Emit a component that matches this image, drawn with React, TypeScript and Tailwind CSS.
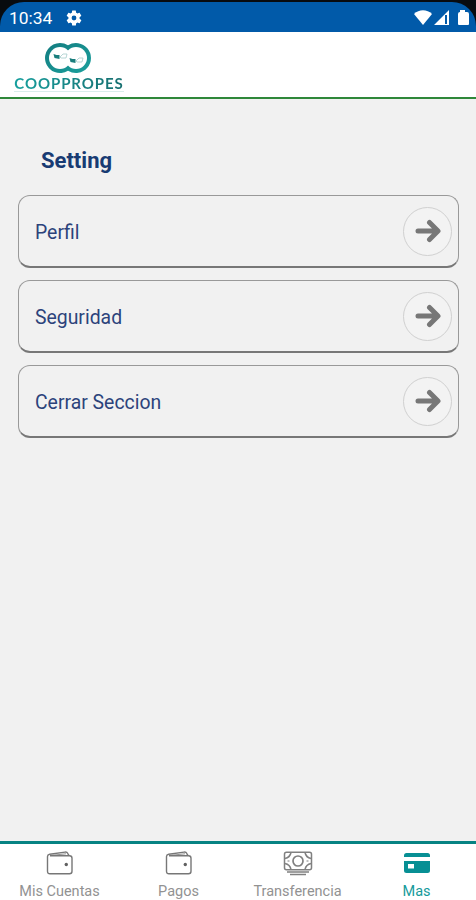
import type { ReactNode } from "react";

type TabItem = {
  label: string;
  icon: ReactNode;
  active?: boolean;
};

function StatusBar() {
  return (
    <div className="h-8 shrink-0 bg-[#080b0f] pt-[2px]">
      <div className="flex h-[30px] items-center justify-between rounded-t-[24px] bg-[#015aa9] pl-[9px] pr-[7px] text-white">
        <div className="flex items-center gap-[13px] pt-px">
          <span className="w-[43px] whitespace-nowrap text-[17.4px] leading-5">10:34</span>
          <svg width="18" height="18" viewBox="0 0 24 24" fill="currentColor">
            <path d="M19.4 13c.04-.3.06-.65.06-1s-.02-.7-.07-1l2.1-1.63a.5.5 0 0 0 .12-.64l-2-3.46a.5.5 0 0 0-.6-.22l-2.5 1a7.3 7.3 0 0 0-1.68-.98l-.38-2.65A.5.5 0 0 0 14 2h-4a.5.5 0 0 0-.5.42l-.37 2.65c-.6.25-1.17.58-1.68.98l-2.5-1a.5.5 0 0 0-.6.22l-2 3.46a.5.5 0 0 0 .12.64L4.6 11c-.05.3-.07.66-.07 1s.02.69.07 1l-2.12 1.63a.5.5 0 0 0-.12.64l2 3.46c.13.22.39.3.6.22l2.5-1c.52.4 1.08.73 1.69.98l.37 2.65c.04.24.25.42.5.42h4a.5.5 0 0 0 .5-.42l.37-2.65c.6-.25 1.17-.58 1.69-.98l2.5 1c.22.08.47 0 .6-.22l2-3.46a.5.5 0 0 0-.12-.64zM12 15.2a3.2 3.2 0 1 1 0-6.4 3.2 3.2 0 0 1 0 6.4z" />
          </svg>
        </div>
        <svg width="56" height="18" viewBox="0 0 56 18" fill="currentColor" className="mt-px">
          <path d="M1 5C6 0 14 0 19 5L10 16z" />
          <path fillRule="evenodd" d="M21 16 36 1v15zM32 6v9h2V6z" />
          <path d="M47 1h5v2h2q2 0 2 2v10q0 1-1 1H46q-1 0-1-1V5q0-2 2-2z" />
        </svg>
      </div>
    </div>
  );
}

function Logo() {
  return (
    <div className="flex w-[110px] flex-col items-center">
      <svg width="46" height="32" viewBox="0 0 46 32" className="mr-[3px]">
        <defs>
          <linearGradient id="ring" x1="0" x2="1" y1="0" y2="1">
            <stop offset="0" stopColor="#137c80" />
            <stop offset="1" stopColor="#1ba09d" />
          </linearGradient>
        </defs>
        <path d="M15 1a15 15 0 0 1 8 2.3A15 15 0 1 1 23 28.7 15 15 0 1 1 15 1z" fill="url(#ring)" />
        <circle cx="15" cy="16" r="11" fill="#fff" />
        <circle cx="31" cy="16" r="11" fill="#fff" />
        <path d="m15 15 3-3h4l-1 4h-5zM31 19l3-3h4l-1 4h-5z" fill="none" stroke="#a5cbca" strokeWidth="0.8" />
        <path d="m8.5 12 3 1h3v4l-5-1zM24.5 16l3 1h3v4l-5-1z" fill="#197d7c" />
      </svg>
      <span className="flex h-[18px] w-[110px] items-center justify-center whitespace-nowrap border-b border-[#d9edea] bg-linear-to-r from-[#169f9e] to-[#176f70] bg-clip-text pt-px font-['Lato',sans-serif] text-[15px] font-bold leading-[18px] tracking-[0.9px] text-transparent">
        COOPPROPES
      </span>
    </div>
  );
}

function MenuCard({ label }: { label: string }) {
  return (
    <button className="flex h-[73px] w-full items-center justify-between rounded-[12px] border border-b-2 border-[#999] border-b-[#777] bg-[#f1f1f1] pl-[16.5px] pr-[6px]">
      <span className="pt-[3px] text-[19.4px] leading-6 text-[#2c437b]">{label}</span>
      <span className="flex size-[49px] items-center justify-center rounded-full border border-[#d0d0d0] bg-[#f3f3f3] pl-px">
        <svg width="26" height="24" viewBox="0 0 26 24" fill="none" stroke="#777" strokeWidth="5" strokeLinecap="round" strokeLinejoin="round">
          <path d="M3 12h19M14.5 3.5l8.5 8.5-8.5 8.5" />
        </svg>
      </span>
    </button>
  );
}

function WalletIcon() {
  return (
    <svg width="28" height="26" viewBox="0 0 28 26" fill="none" stroke="#777" strokeWidth="1.4" strokeLinejoin="round">
      <path d="M4 5.7h19.5q2.500 0 2.500 2.500V21.300q0 2.500-2.500 2.500H4q-2.500 0-2.500-2.500V6.500q0-1.800 2.200-2.200L19 2.100q2-.3 2.700 1.200l1.300 2.400" />
      <path d="m4 5.500 16-1.700" strokeWidth="0.8" />
      <circle cx="20.3" cy="14.5" r="1.7" fill="#606060" stroke="none" />
    </svg>
  );
}

function MoneyIcon() {
  return (
    <svg width="30" height="26" viewBox="0 0 30 26" fill="none" stroke="#808080" strokeWidth="1.5">
      <rect x="1.5" y="2.2" width="27" height="17.5" rx="2" />
      <circle cx="15" cy="11" r="5" strokeWidth="1.7" />
      <path d="M2 8.500q5-1 6-6M22 2.500q1 5 6 6M2 13.500q5 1 6 6M22 19.500q1-5 6-6" />
      <path d="M4.500 11h2M23.500 11h2" strokeWidth="1" />
      <path d="M4 22h22M7 24.500h16" />
    </svg>
  );
}

function CardIcon() {
  return (
    <svg width="26" height="22" viewBox="0 0 26 22" fill="#078f94">
      <path d="M2.5 1h21Q26 1 26 3.500V5H0V3.500Q0 1 2.500 1z" />
      <path fillRule="evenodd" d="M0 9h26v9.500q0 2.500-2.500 2.500h-21Q0 21 0 18.500zM4 12v4.500h6V12z" />
    </svg>
  );
}

const menu = ["Perfil", "Seguridad", "Cerrar Seccion"];

const tabs: TabItem[] = [
  { label: "Mis Cuentas", icon: <WalletIcon /> },
  { label: "Pagos", icon: <WalletIcon /> },
  { label: "Transferencia", icon: <MoneyIcon /> },
  { label: "Mas", icon: <CardIcon />, active: true },
];

export default function App() {
  return (
    <div className="flex h-[900px] w-full flex-col overflow-hidden bg-[#f1f1f1] font-['Roboto',sans-serif]">
      <StatusBar />
      <header className="h-[67px] shrink-0 border-b-2 border-[#2f8739] bg-white pl-[14px] pt-[10px]">
        <Logo />
      </header>

      <main className="flex-1 px-[17.5px] pt-[46px]">
        <h1 className="h-[50px] pl-[23.5px] text-[22px] font-bold leading-8 text-[#183b73]">Setting</h1>
        <div className="flex flex-col gap-3">
          {menu.map((label) => (
            <MenuCard key={label} label={label} />
          ))}
        </div>
      </main>

      <nav className="grid h-[59px] shrink-0 grid-cols-4 border-t-[3px] border-[#078383] bg-white">
        {tabs.map((tab) => (
          <div
            key={tab.label}
            className={`flex flex-col items-center ${tab.active ? "text-[#169a9b]" : "text-[#929292]"}`}
          >
            <div className="flex h-[38px] items-center justify-center">{tab.icon}</div>
            <span className="whitespace-nowrap text-[14.5px] leading-5">{tab.label}</span>
          </div>
        ))}
      </nav>
    </div>
  );
}
